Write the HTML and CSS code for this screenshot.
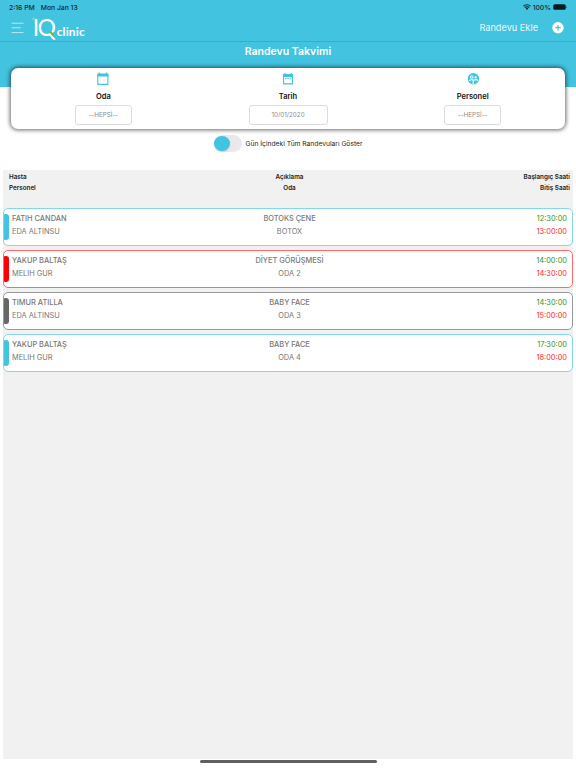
FILE: index.html
```
<!DOCTYPE html>
<html lang="tr">
  <head>
    <title>Randevu Takvimi</title>
    <meta charset="utf-8" />
    <meta name="viewport" content="width=device-width, initial-scale=1" />
    <link rel="stylesheet" href="styles.css">
  </head>
  <body>
    <!-- Status bar -->
    <div class="status">
      <span class="clock">2:16 PM</span>
      <span class="date">Mon Jan 13</span>
      <svg class="wifi" width="8" height="6" viewBox="0 0 16 12">
        <path d="M1 4.5a10 10 0 0 1 14 0M3.6 7.2a6.2 6.2 0 0 1 8.8 0" fill="none" stroke="#102a31" stroke-width="2.2" />
        <path d="M5.3 8.9a3.8 3.8 0 0 1 5.4 0L8 11.8z" fill="#102a31" />
      </svg>
      <span class="percent">100%</span>
      <svg width="15" height="6" viewBox="0 0 15 6">
        <rect x="0.3" y="0.3" width="12.4" height="5.4" rx="1.5" fill="#0a1a1f" />
        <rect x="13.2" y="2" width="0.8" height="2" rx="0.4" fill="#26606e" />
      </svg>
    </div>

    <!-- Navigation -->
    <div class="navbar">
      <svg class="menu" width="13" height="12" viewBox="0 0 13 12">
        <path d="M0.5 1.2h12M0.5 5.8h9.3M0.5 10.6h12" stroke="#b9e8f2" stroke-width="1" />
      </svg>
      <svg class="logo" width="56" height="27" viewBox="0 0 56 27">
        <path d="M.6 4.200c2-.5 3.500.2 3.600 2.400c-2.100.3-3.200-.5-3.600-2.400z" fill="#47c4c0" stroke="#9be0dc" stroke-width="0.6" />
        <text class="logo-mark" x="0.800" y="22" textLength="23">IQ</text>
        <path d="M20.200 19.400l4.400 3.600" stroke="#42c3e0" stroke-width="3.600" />
        <path d="M17.600 17.600l3.400 2.900" stroke="#76b82a" stroke-width="2" />
        <text class="logo-name" x="24.700" y="22.300" textLength="28">clinic</text>
      </svg>
      <span class="add-label">Randevu Ekle</span>
      <svg width="12" height="12" viewBox="0 0 12 12">
        <circle cx="6" cy="5.7" r="5.7" fill="#fff" />
        <path d="M6 2.9v5.6M3.2 5.7h5.6" stroke="#42c3e0" stroke-width="1.2" />
      </svg>
    </div>

    <div class="title">Randevu Takvimi</div>

    <!-- Filters -->
    <div class="filters">
      <div class="filter">
        <svg width="14" height="14" viewBox="0 0 14 14">
          <path d="M1.8 3.5h10.1v8.9h-10.1z" fill="none" stroke="#42c3e0" stroke-width="1.1" />
          <path d="M1.2 1.6h11.3v3h-11.3zM2.7.5h1.2v2h-1.2zM9.8.5h1.2v2h-1.2z" fill="#42c3e0" />
        </svg>
        <label>Oda</label>
        <div class="field">--HEPSİ--</div>
      </div>
      <div class="filter">
        <svg width="14" height="14" viewBox="0 0 14 14">
          <path d="M2.6 3.5h8.8v8.4h-8.8z" fill="none" stroke="#42c3e0" stroke-width="1.1" />
          <path d="M2 2h10v3h-10zM3.3 1h1.2v2h-1.2zM9.5 1h1.2v2h-1.2z" fill="#42c3e0" />
          <path d="M4 6.7h1.5M6.3 6.7h1.5M8.6 6.7h1.5" stroke="#42c3e0" stroke-width="1" />
        </svg>
        <label>Tarih</label>
        <div class="field wide">10/01/2020</div>
      </div>
      <div class="filter">
        <svg width="14" height="14" viewBox="0 0 14 14">
          <circle cx="7.4" cy="6.7" r="5.7" fill="#42c3e0" />
          <circle cx="5.7" cy="5.1" r="1.3" fill="none" stroke="#fff" stroke-width="1" />
          <circle cx="9.6" cy="5.4" r="1.1" fill="#fff" />
          <path d="M2.9 8.8c1.2-1 2.6-1.3 4.3-.9v4M8 8.2c1.3-.8 2.7-.7 4 .2" fill="none" stroke="#fff" stroke-width="1.1" />
        </svg>
        <label>Personel</label>
        <div class="field">--HEPSİ--</div>
      </div>
    </div>

    <div class="toggle-row">
      <div class="toggle"><div class="knob"></div></div>
      <span>Gün İçindeki Tüm Randevuları Göster</span>
    </div>

    <!-- Appointments -->
    <div class="list">
      <div class="list-head">
        <div class="col">Hasta<br />Personel</div>
        <div class="col center">Açıklama<br />Oda</div>
        <div class="col right">Başlangıç Saati<br />Bitiş Saati</div>
      </div>
      <div class="row blue">
        <div class="mark"></div>
        <div class="col"><b>FATIH CANDAN</b><span>EDA ALTINSU</span></div>
        <div class="col center"><b>BOTOKS ÇENE</b><span>BOTOX</span></div>
        <div class="col right"><span class="start">12:30:00</span><span class="end">13:00:00</span></div>
      </div>
      <div class="row red">
        <div class="mark"></div>
        <div class="col"><b>YAKUP BALTAŞ</b><span>MELIH GUR</span></div>
        <div class="col center"><b>DİYET GÖRÜŞMESİ</b><span>ODA 2</span></div>
        <div class="col right"><span class="start">14:00:00</span><span class="end">14:30:00</span></div>
      </div>
      <div class="row gray">
        <div class="mark"></div>
        <div class="col"><b>TIMUR ATILLA</b><span>EDA ALTINSU</span></div>
        <div class="col center"><b>BABY FACE</b><span>ODA 3</span></div>
        <div class="col right"><span class="start">14:30:00</span><span class="end">15:00:00</span></div>
      </div>
      <div class="row blue">
        <div class="mark"></div>
        <div class="col"><b>YAKUP BALTAŞ</b><span>MELIH GUR</span></div>
        <div class="col center"><b>BABY FACE</b><span>ODA 4</span></div>
        <div class="col right"><span class="start">17:30:00</span><span class="end">18:00:00</span></div>
      </div>
    </div>
    <div class="home-bar"></div>
  </body>
</html>
```
FILE: styles.css
```
* {
  box-sizing: border-box;
}

body {
  margin: 0;
  height: 768px;
  display: flex;
  flex-direction: column;
  background: #fff;
  font-family: Inter, "Liberation Sans", sans-serif;
  overflow: hidden;
}

svg {
  display: block;
  flex: none;
}

.status {
  display: flex;
  align-items: center;
  height: 14px;
  padding: 0 8px 0 9px;
  background: #42c3e0;
  color: #102a31;
  font-size: 6.8px;
  font-weight: 500;
}

.date {
  margin-left: 6px;
}

.wifi {
  margin-left: auto;
}

.percent {
  margin: 0 2px;
}

.navbar {
  display: flex;
  align-items: center;
  height: 28px;
  padding: 0 12px 0 11px;
  background: #42c3e0;
  border-bottom: 1px solid #39adc8;
}

.logo {
  margin-left: 8px;
}

.logo-mark {
  font-family: Lato, sans-serif;
  font-size: 23px;
  fill: #fff;
}

.logo-name {
  font-family: Lato, sans-serif;
  font-size: 12px;
  font-weight: bold;
  fill: #fff;
}

.add-label {
  margin-left: auto;
  margin-right: 14px;
  color: #e8f8fb;
  font-size: 9.2px;
}

.title {
  height: 45px;
  padding-top: 3px;
  background: #42c3e0;
  color: #fff;
  font-size: 10.5px;
  font-weight: 600;
  line-height: 14px;
  text-align: center;
}

.filters {
  display: flex;
  height: 61px;
  margin: -19px 11px 0;
  background: #fff;
  border-radius: 7px;
  box-shadow: 0 0 4px 1px rgba(0, 0, 0, 0.6);
}

.filter {
  flex: 1;
  display: flex;
  flex-direction: column;
  align-items: center;
  padding-top: 4px;
}

.filter label {
  margin-top: 5px;
  color: #111;
  font-size: 7.5px;
  font-weight: 600;
  line-height: 11px;
}

.field {
  width: 57px;
  height: 20px;
  margin-top: 3px;
  border: 1px solid #dcdcdc;
  border-radius: 3px;
  color: #8a8a8a;
  font-size: 6.3px;
  font-feature-settings: "calt" 0;
  line-height: 18px;
  text-align: center;
}

.field.wide {
  width: 79px;
}

.toggle-row {
  display: flex;
  align-items: center;
  justify-content: center;
  height: 29px;
  color: #222;
  font-size: 6.7px;
}

.toggle {
  width: 28px;
  height: 17px;
  margin-right: 4px;
  padding: 1px 0 0;
  border-radius: 9px;
  background: #e9e9eb;
}

.knob {
  width: 16px;
  height: 15px;
  border-radius: 50%;
  background: #42c3e0;
  box-shadow: 0 1px 2px rgba(0, 0, 0, 0.15);
}

.list {
  height: 589px;
  margin: 12px 3px 0;
  background: #f1f1f1;
}

.list-head {
  display: flex;
  height: 38px;
  padding: 2px 3px 0 6px;
  color: #222;
  font-size: 6.3px;
  font-weight: 600;
  line-height: 11px;
}

.col {
  flex: 1;
}

.center {
  text-align: center;
}

.right {
  text-align: right;
}

.row {
  display: flex;
  height: 38px;
  margin-bottom: 4.1px;
  padding-right: 5px;
  background: #fff;
  border: 1px solid;
  border-radius: 5px;
}

.row .col {
  padding-top: 4px;
  color: #777;
  font-size: 7.4px;
  line-height: 12.6px;
}

.row b {
  font-weight: 500;
}

.row b,
.row span {
  display: block;
}

.mark {
  width: 5px;
  height: 26px;
  margin: 5px 3px 0 0;
  border-radius: 1px 3px 3px 1px;
}

.blue {
  border-color: #84d8ea;
}

.blue .mark {
  background: #42c3e0;
}

.red {
  border-color: #ff6a6a;
}

.red .mark {
  background: #f00;
}

.gray {
  border-color: #999;
}

.gray .mark {
  background: #666;
}

.row .start {
  color: #2f942f;
}

.row .end {
  color: #ff2a2a;
}

.home-bar {
  width: 177px;
  height: 3px;
  margin: 1px auto 0;
  border-radius: 2px;
  background: #606060;
}
```
